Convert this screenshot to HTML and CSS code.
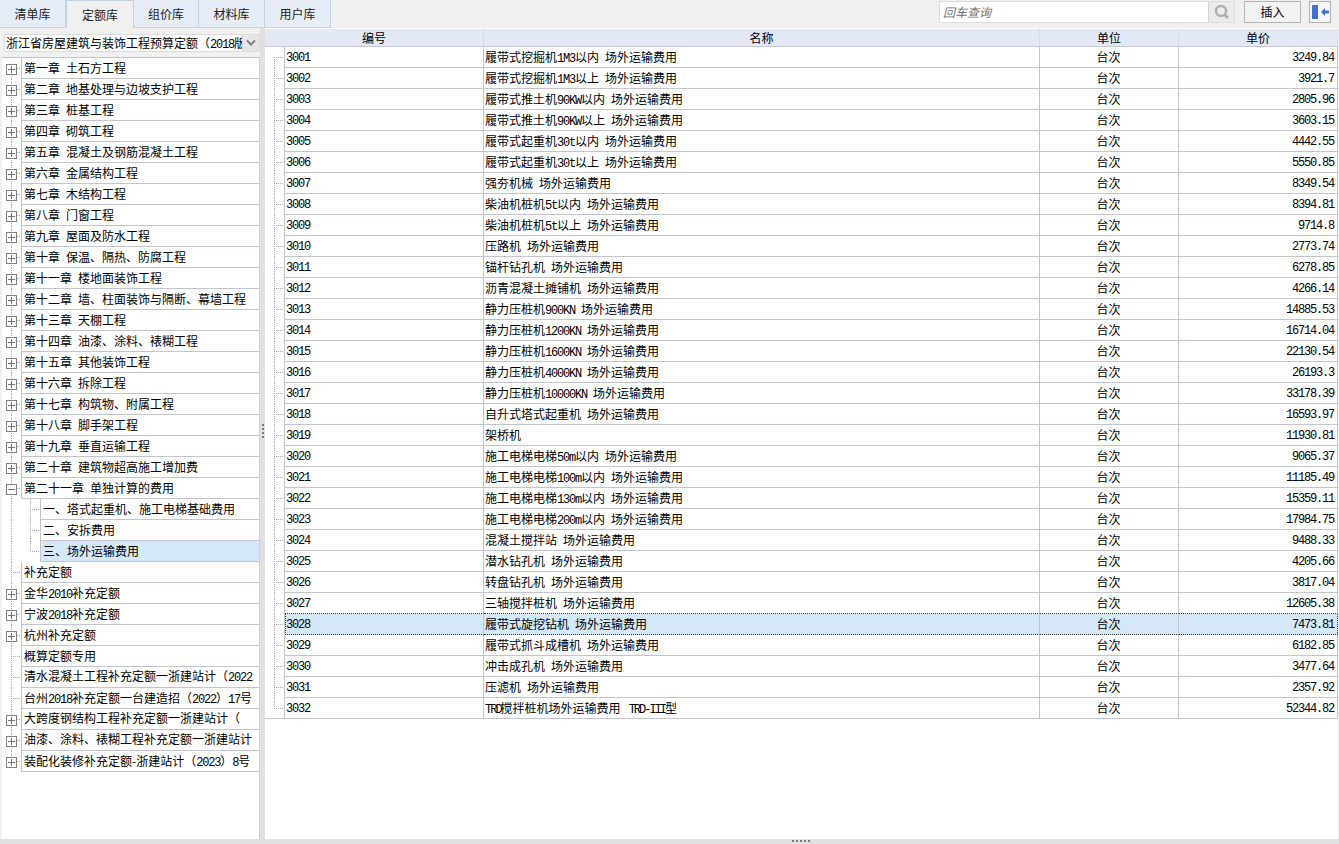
FILE: index.html
```html
<!DOCTYPE html>
<html lang="zh-CN">
<head>
<meta charset="utf-8">
<title>定额库</title>
<link rel="stylesheet" href="styles.css">
</head>
<body>
<div class="app">
  <header class="topbar">
    <nav class="tabs">
      <a class="tab">清单库</a>
      <a class="tab tab-active">定额库</a>
      <a class="tab">组价库</a>
      <a class="tab">材料库</a>
      <a class="tab">用户库</a>
    </nav>
    <div class="tools">
      <div class="search">
        <div class="search-input">回车查询</div>
        <div class="search-btn">
          <svg width="18" height="18" viewBox="0 0 18 18"><circle cx="8" cy="8" r="5" fill="none" stroke="#b0b0b0" stroke-width="2.4"/><path d="M11.5 11.5L15 15" stroke="#b0b0b0" stroke-width="3"/></svg>
        </div>
      </div>
      <div class="insert-btn">插入</div>
      <div class="dock-btn">
        <svg width="20" height="20" viewBox="0 0 20 20"><rect x="2" y="3" width="6" height="14" fill="#3f74c8"/><path d="M11 10L15 6V8.500H19V11.500H15V14Z" fill="#3f74c8"/></svg>
      </div>
    </div>
  </header>

  <main class="main">
    <aside class="left">
      <div class="select-bar">
        <div class="select">
          <div class="select-text">浙江省房屋建筑与装饰工程预算定额（<span class="l">2018</span>版</div>
          <div class="select-arrow">
            <svg width="10" height="8" viewBox="0 0 10 8"><path d="M1 1.500L5 5.500L9 1.500" fill="none" stroke="#808080" stroke-width="2"/></svg>
          </div>
        </div>
      </div>
      <div class="tree">
        <div class="node"><div class="gut gut-first"><i class="box plus"></i></div><div class="lab">第一章<span class="l"> </span>土石方工程</div></div>
        <div class="node"><div class="gut"><i class="box plus"></i></div><div class="lab">第二章<span class="l"> </span>地基处理与边坡支护工程</div></div>
        <div class="node"><div class="gut"><i class="box plus"></i></div><div class="lab">第三章<span class="l"> </span>桩基工程</div></div>
        <div class="node"><div class="gut"><i class="box plus"></i></div><div class="lab">第四章<span class="l"> </span>砌筑工程</div></div>
        <div class="node"><div class="gut"><i class="box plus"></i></div><div class="lab">第五章<span class="l"> </span>混凝土及钢筋混凝土工程</div></div>
        <div class="node"><div class="gut"><i class="box plus"></i></div><div class="lab">第六章<span class="l"> </span>金属结构工程</div></div>
        <div class="node"><div class="gut"><i class="box plus"></i></div><div class="lab">第七章<span class="l"> </span>木结构工程</div></div>
        <div class="node"><div class="gut"><i class="box plus"></i></div><div class="lab">第八章<span class="l"> </span>门窗工程</div></div>
        <div class="node"><div class="gut"><i class="box plus"></i></div><div class="lab">第九章<span class="l"> </span>屋面及防水工程</div></div>
        <div class="node"><div class="gut"><i class="box plus"></i></div><div class="lab">第十章<span class="l"> </span>保温、隔热、防腐工程</div></div>
        <div class="node"><div class="gut"><i class="box plus"></i></div><div class="lab">第十一章<span class="l"> </span>楼地面装饰工程</div></div>
        <div class="node"><div class="gut"><i class="box plus"></i></div><div class="lab">第十二章<span class="l"> </span>墙、柱面装饰与隔断、幕墙工程</div></div>
        <div class="node"><div class="gut"><i class="box plus"></i></div><div class="lab">第十三章<span class="l"> </span>天棚工程</div></div>
        <div class="node"><div class="gut"><i class="box plus"></i></div><div class="lab">第十四章<span class="l"> </span>油漆、涂料、裱糊工程</div></div>
        <div class="node"><div class="gut"><i class="box plus"></i></div><div class="lab">第十五章<span class="l"> </span>其他装饰工程</div></div>
        <div class="node"><div class="gut"><i class="box plus"></i></div><div class="lab">第十六章<span class="l"> </span>拆除工程</div></div>
        <div class="node"><div class="gut"><i class="box plus"></i></div><div class="lab">第十七章<span class="l"> </span>构筑物、附属工程</div></div>
        <div class="node"><div class="gut"><i class="box plus"></i></div><div class="lab">第十八章<span class="l"> </span>脚手架工程</div></div>
        <div class="node"><div class="gut"><i class="box plus"></i></div><div class="lab">第十九章<span class="l"> </span>垂直运输工程</div></div>
        <div class="node"><div class="gut"><i class="box plus"></i></div><div class="lab">第二十章<span class="l"> </span>建筑物超高施工增加费</div></div>
        <div class="node"><div class="gut"><i class="box minus"></i></div><div class="lab">第二十一章<span class="l"> </span>单独计算的费用</div></div>
        <div class="node"><div class="gut gut-sub"></div><div class="lab">一、塔式起重机、施工电梯基础费用</div></div>
        <div class="node"><div class="gut gut-sub"></div><div class="lab">二、安拆费用</div></div>
        <div class="node"><div class="gut gut-sub gut-sub-last"></div><div class="lab lab-sel">三、场外运输费用</div></div>
        <div class="node"><div class="gut"></div><div class="lab">补充定额</div></div>
        <div class="node"><div class="gut"><i class="box plus"></i></div><div class="lab">金华<span class="l">2010</span>补充定额</div></div>
        <div class="node"><div class="gut"><i class="box plus"></i></div><div class="lab">宁波<span class="l">2018</span>补充定额</div></div>
        <div class="node"><div class="gut"><i class="box plus"></i></div><div class="lab">杭州补充定额</div></div>
        <div class="node"><div class="gut"></div><div class="lab lab-up1">概算定额专用</div></div>
        <div class="node"><div class="gut"></div><div class="lab lab-up2">清水混凝土工程补充定额一浙建站计（<span class="l">2022</span></div></div>
        <div class="node"><div class="gut"></div><div class="lab">台州<span class="l">2018</span>补充定额一台建造招（<span class="l">2022</span>）<span class="l">17</span>号</div></div>
        <div class="node"><div class="gut"><i class="box plus"></i></div><div class="lab lab-up2">大跨度钢结构工程补充定额一浙建站计（</div></div>
        <div class="node"><div class="gut"><i class="box plus"></i></div><div class="lab lab-up2">油漆、涂料、裱糊工程补充定额一浙建站计</div></div>
        <div class="node"><div class="gut gut-last"><i class="box plus"></i></div><div class="lab">装配化装修补充定额-浙建站计（<span class="l">2023</span>）<span class="l">8</span>号</div></div>
      </div>
    </aside>

    <div class="vsplit"><i class="vgrip"></i></div>

    <section class="right">
      <table class="grid">
        <thead>
          <tr><th class="th-code">编号</th><th>名称</th><th>单位</th><th>单价</th></tr>
        </thead>
        <tbody>
          <tr><td class="t-gut t-first"></td><td class="num">3001</td><td>履带式挖掘机<span class="l">1M3</span>以内<span class="l"> </span>场外运输费用</td><td class="unit">台次</td><td class="price">3249.84</td></tr>
          <tr><td class="t-gut"></td><td class="num">3002</td><td>履带式挖掘机<span class="l">1M3</span>以上<span class="l"> </span>场外运输费用</td><td class="unit">台次</td><td class="price">3921.7</td></tr>
          <tr><td class="t-gut"></td><td class="num">3003</td><td>履带式推土机<span class="l">90KW</span>以内<span class="l"> </span>场外运输费用</td><td class="unit">台次</td><td class="price">2805.96</td></tr>
          <tr><td class="t-gut"></td><td class="num">3004</td><td>履带式推土机<span class="l">90KW</span>以上<span class="l"> </span>场外运输费用</td><td class="unit">台次</td><td class="price">3603.15</td></tr>
          <tr><td class="t-gut"></td><td class="num">3005</td><td>履带式起重机<span class="l">30t</span>以内<span class="l"> </span>场外运输费用</td><td class="unit">台次</td><td class="price">4442.55</td></tr>
          <tr><td class="t-gut"></td><td class="num">3006</td><td>履带式起重机<span class="l">30t</span>以上<span class="l"> </span>场外运输费用</td><td class="unit">台次</td><td class="price">5550.85</td></tr>
          <tr><td class="t-gut"></td><td class="num">3007</td><td>强夯机械<span class="l"> </span>场外运输费用</td><td class="unit">台次</td><td class="price">8349.54</td></tr>
          <tr><td class="t-gut"></td><td class="num">3008</td><td>柴油机桩机<span class="l">5t</span>以内<span class="l"> </span>场外运输费用</td><td class="unit">台次</td><td class="price">8394.81</td></tr>
          <tr><td class="t-gut"></td><td class="num">3009</td><td>柴油机桩机<span class="l">5t</span>以上<span class="l"> </span>场外运输费用</td><td class="unit">台次</td><td class="price">9714.8</td></tr>
          <tr><td class="t-gut"></td><td class="num">3010</td><td>压路机<span class="l"> </span>场外运输费用</td><td class="unit">台次</td><td class="price">2773.74</td></tr>
          <tr><td class="t-gut"></td><td class="num">3011</td><td>锚杆钻孔机<span class="l"> </span>场外运输费用</td><td class="unit">台次</td><td class="price">6278.85</td></tr>
          <tr><td class="t-gut"></td><td class="num">3012</td><td>沥青混凝土摊铺机<span class="l"> </span>场外运输费用</td><td class="unit">台次</td><td class="price">4266.14</td></tr>
          <tr><td class="t-gut"></td><td class="num">3013</td><td>静力压桩机<span class="l">900KN </span>场外运输费用</td><td class="unit">台次</td><td class="price">14885.53</td></tr>
          <tr><td class="t-gut"></td><td class="num">3014</td><td>静力压桩机<span class="l">1200KN </span>场外运输费用</td><td class="unit">台次</td><td class="price">16714.04</td></tr>
          <tr><td class="t-gut"></td><td class="num">3015</td><td>静力压桩机<span class="l">1600KN </span>场外运输费用</td><td class="unit">台次</td><td class="price">22130.54</td></tr>
          <tr><td class="t-gut"></td><td class="num">3016</td><td>静力压桩机<span class="l">4000KN </span>场外运输费用</td><td class="unit">台次</td><td class="price">26193.3</td></tr>
          <tr><td class="t-gut"></td><td class="num">3017</td><td>静力压桩机<span class="l">10000KN </span>场外运输费用</td><td class="unit">台次</td><td class="price">33178.39</td></tr>
          <tr><td class="t-gut"></td><td class="num">3018</td><td>自升式塔式起重机<span class="l"> </span>场外运输费用</td><td class="unit">台次</td><td class="price">16593.97</td></tr>
          <tr><td class="t-gut"></td><td class="num">3019</td><td>架桥机</td><td class="unit">台次</td><td class="price">11930.81</td></tr>
          <tr><td class="t-gut"></td><td class="num">3020</td><td>施工电梯电梯<span class="l">50m</span>以内<span class="l"> </span>场外运输费用</td><td class="unit">台次</td><td class="price">9065.37</td></tr>
          <tr><td class="t-gut"></td><td class="num">3021</td><td>施工电梯电梯<span class="l">100m</span>以内<span class="l"> </span>场外运输费用</td><td class="unit">台次</td><td class="price">11185.49</td></tr>
          <tr><td class="t-gut"></td><td class="num">3022</td><td>施工电梯电梯<span class="l">130m</span>以内<span class="l"> </span>场外运输费用</td><td class="unit">台次</td><td class="price">15359.11</td></tr>
          <tr><td class="t-gut"></td><td class="num">3023</td><td>施工电梯电梯<span class="l">200m</span>以内<span class="l"> </span>场外运输费用</td><td class="unit">台次</td><td class="price">17984.75</td></tr>
          <tr><td class="t-gut"></td><td class="num">3024</td><td>混凝土搅拌站<span class="l"> </span>场外运输费用</td><td class="unit">台次</td><td class="price">9488.33</td></tr>
          <tr><td class="t-gut"></td><td class="num">3025</td><td>潜水钻孔机<span class="l"> </span>场外运输费用</td><td class="unit">台次</td><td class="price">4205.66</td></tr>
          <tr><td class="t-gut"></td><td class="num">3026</td><td>转盘钻孔机<span class="l"> </span>场外运输费用</td><td class="unit">台次</td><td class="price">3817.04</td></tr>
          <tr class="before-sel"><td class="t-gut"></td><td class="num">3027</td><td>三轴搅拌桩机<span class="l"> </span>场外运输费用</td><td class="unit">台次</td><td class="price">12605.38</td></tr>
          <tr class="sel"><td class="t-gut"></td><td class="num">3028</td><td>履带式旋挖钻机<span class="l"> </span>场外运输费用</td><td class="unit">台次</td><td class="price">7473.81</td></tr>
          <tr><td class="t-gut"></td><td class="num">3029</td><td>履带式抓斗成槽机<span class="l"> </span>场外运输费用</td><td class="unit">台次</td><td class="price">6182.85</td></tr>
          <tr><td class="t-gut"></td><td class="num">3030</td><td>冲击成孔机<span class="l"> </span>场外运输费用</td><td class="unit">台次</td><td class="price">3477.64</td></tr>
          <tr><td class="t-gut"></td><td class="num">3031</td><td>压滤机<span class="l"> </span>场外运输费用</td><td class="unit">台次</td><td class="price">2357.92</td></tr>
          <tr><td class="t-gut t-last"></td><td class="num">3032</td><td><span class="l l-tight">TRD</span>搅拌桩机场外运输费用<span class="l"> </span><span class="l l-tight l-gap">TRD-III</span>型</td><td class="unit">台次</td><td class="price">52344.82</td></tr>
        </tbody>
      </table>
    </section>
  </main>

  <div class="hsplit"><i class="hgrip"></i></div>
</div>
</body>
</html>
```

FILE: styles.css
```css
* { box-sizing: border-box; }
html, body { margin: 0; padding: 0; }
body {
  width: 1339px;
  height: 844px;
  overflow: hidden;
  background: #f0f0f0;
  color: #000;
  font: 12px/20px "Noto Sans CJK SC", "Liberation Sans", sans-serif;
}
.l, .num, .price {
  font-family: "Liberation Mono", monospace;
  font-size: 12px;
  letter-spacing: -1.2px;
  white-space: pre;
}
.l-tight { letter-spacing: -2px; }
.l-gap { margin-left: 2px; }
.app { display: flex; flex-direction: column; height: 844px; }

/* Top bar */
.topbar { display: flex; justify-content: space-between; height: 28px; flex: none; }
.tabs { display: flex; height: 28px; }
.tab {
  width: 66px;
  height: 28px;
  line-height: 28px;
  text-align: center;
  color: #222;
  background: #e6edf7;
  border-right: 1px solid #c4d2e4;
  border-bottom: 1px solid #c4d2e4;
}
.tab-active {
  width: 68px;
  background: #f0f0f0;
  border-top: 1px solid #c4d2e4;
  border-left: 1px solid #c4d2e4;
  border-bottom: none;
}
.tab-active + .tab { width: 65px; }
.tools { display: flex; align-items: flex-start; padding-top: 1px; }
.search { display: flex; width: 296px; height: 22px; border: 1px solid #dcdcdc; background: #fff; }
.search-input {
  flex: 1;
  padding-left: 3px;
  font-style: italic;
  color: #707070;
  line-height: 19px;
}
.search-btn {
  width: 26px;
  display: flex;
  align-items: center;
  justify-content: center;
  background: #ececec;
  border-left: 1px solid #d4d4d4;
}
.insert-btn {
  width: 57px;
  height: 22px;
  margin-left: 9px;
  border: 1px solid #b4b4b4;
  background: #f2f2f2;
  text-align: center;
  line-height: 20px;
}
.dock-btn {
  width: 22px;
  height: 22px;
  margin: 0 8px;
  border: 1px solid #b0b0b0;
  display: flex;
  align-items: center;
  justify-content: center;
  background: #f4f4f4;
}

/* Main area */
.main { display: flex; flex: 1; min-height: 0; }
.left { width: 260px; flex: none; padding-left: 2px; display: flex; flex-direction: column; }
.select-bar { height: 29px; padding: 6px 0 5px 2px; flex: none; }
.select { display: flex; height: 18px; border: 1px solid #dcdcdc; background: #fff; }
.select-text { flex: 1; overflow: hidden; white-space: nowrap; padding-left: 1px; line-height: 16px; min-width: 0; }
.select-arrow {
  width: 17px;
  flex: none;
  display: flex;
  align-items: center;
  justify-content: center;
  background: #e6e6e6;
  border-left: 1px solid #d4d4d4;
}

/* Tree */
.tree { flex: 1; background: #fff; border-top: 1px solid #c4c4d0; border-right: 1px solid #d0d0d0; }
.node { display: flex; height: 21px; }
.gut {
  position: relative;
  width: 19px;
  flex: none;
  background-image:
    repeating-linear-gradient(180deg, #aaa 0 1px, transparent 1px 2px),
    repeating-linear-gradient(90deg, #aaa 0 1px, transparent 1px 2px);
  background-repeat: no-repeat;
  background-size: 1px 100%, 10px 1px;
  background-position: 9px 0, 9px 10px;
}
.gut-first { background-size: 1px 11px, 10px 1px; background-position: 9px 10px, 9px 10px; }
.gut-last { background-size: 1px 11px, 10px 1px; background-position: 9px 0, 9px 10px; }
.gut-sub {
  width: 38px;
  background-image:
    repeating-linear-gradient(180deg, #aaa 0 1px, transparent 1px 2px),
    repeating-linear-gradient(180deg, #aaa 0 1px, transparent 1px 2px),
    repeating-linear-gradient(90deg, #aaa 0 1px, transparent 1px 2px);
  background-size: 1px 100%, 1px 100%, 10px 1px;
  background-position: 9px 0, 28px 0, 28px 10px;
}
.gut-sub-last { background-size: 1px 100%, 1px 11px, 10px 1px; }
.box {
  position: absolute;
  left: 4px;
  top: 6px;
  width: 11px;
  height: 11px;
  border: 1px solid #808080;
  background-color: #fff;
  background-repeat: no-repeat;
}
.plus {
  background-image: linear-gradient(#707070, #707070), linear-gradient(#707070, #707070);
  background-size: 7px 1px, 1px 7px;
  background-position: 1px 4px, 4px 1px;
}
.minus {
  background-image: linear-gradient(#707070, #707070);
  background-size: 7px 1px;
  background-position: 1px 4px;
}
.lab {
  flex: 1;
  min-width: 0;
  height: 21px;
  padding-left: 2px;
  line-height: 20px;
  white-space: nowrap;
  overflow: hidden;
  border-left: 1px solid #c4c4d0;
  border-bottom: 1px solid #c4c4d0;
}
.lab-sel { background: #d5e8f8; }
.lab-up1 { line-height: 19px; }
.lab-up2 { line-height: 17px; }

/* Splitters */
.vsplit {
  width: 5px;
  flex: none;
  background: #e0e0e0;
  display: flex;
  align-items: center;
  justify-content: flex-end;
  padding-bottom: 5px;
}
.vgrip {
  width: 2px;
  height: 14px;
  margin-right: 1px;
  background: repeating-linear-gradient(180deg, #777 0 2px, transparent 2px 4px);
}
.hsplit {
  height: 5px;
  flex: none;
  background: #e0e0e0;
  display: flex;
  justify-content: center;
  padding-top: 1px;
}
.hgrip {
  width: 18px;
  height: 2px;
  margin-left: 263px;
  background: repeating-linear-gradient(90deg, #777 0 2px, transparent 2px 4px);
}

/* Grid */
.right { width: 1073px; flex: none; background: #fff; padding-top: 1px; }
.grid, .grid thead, .grid tbody { display: block; width: 1073px; }
.grid tr {
  display: grid;
  grid-template-columns: 20px 199px 556px 139px 159px;
}
.grid th {
  display: block;
  height: 18px;
  padding: 0;
  font-weight: normal;
  line-height: 17px;
  text-align: center;
  background: #e2e9f5;
  border-right: 1px solid #d2dcec;
  border-bottom: 1px solid #c8c8d8;
}
.grid th.th-code { grid-column: span 2; }
.grid td {
  display: block;
  height: 21px;
  padding: 0 0 0 1px;
  line-height: 20px;
  white-space: nowrap;
  overflow: hidden;
  border-right: 1px solid #c4c4d0;
  border-bottom: 1px solid #c4c4d0;
}
.grid td.num { padding-left: 1px; line-height: 22px; }
.grid td.unit { padding: 0 1px 0 0; text-align: center; }
.grid td.price { padding: 0 3px 0 0; text-align: right; line-height: 22px; }
.grid td.t-gut {
  padding: 0;
  border-bottom: none;
  background-image:
    repeating-linear-gradient(180deg, #aaa 0 1px, transparent 1px 2px),
    repeating-linear-gradient(90deg, #aaa 0 1px, transparent 1px 2px);
  background-repeat: no-repeat;
  background-size: 1px 100%, 10px 1px;
  background-position: 9px 0, 9px 10px;
}
.grid td.t-first { background-size: 1px 11px, 10px 1px; background-position: 9px 10px, 9px 10px; }
.grid td.t-last { background-size: 1px 11px, 10px 1px; background-position: 9px 0, 9px 10px; border-bottom: 1px solid #c4c4d0; }
.before-sel td:not(.t-gut) { border-bottom: 1px dotted #333; }
.sel td:not(.t-gut) { background: #d5e8f8; border-bottom: 1px dotted #333; }
.sel td.num { border-left: 1px dotted #333; padding-left: 0; }
.sel td.price { border-right: 1px dotted #333; }
```
